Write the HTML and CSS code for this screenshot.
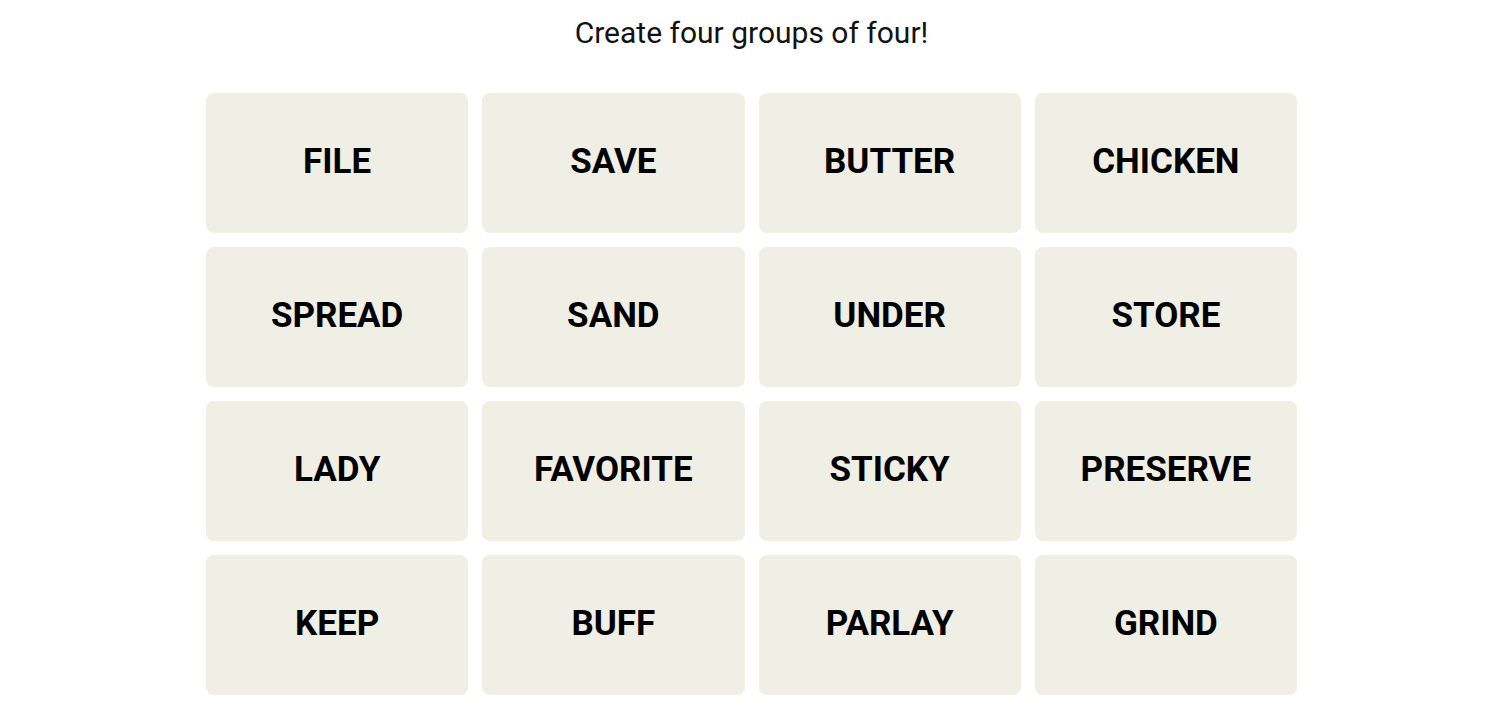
FILE: index.html
```html
<!DOCTYPE html>
<html lang="en">
<head>
<meta charset="utf-8">
<title>Connections</title>
<link rel="stylesheet" href="styles.css">
</head>
<body>
<main class="game">
  <h1 class="prompt">Create four groups of four!</h1>
  <section class="board">
    <button class="tile">FILE</button>
    <button class="tile">SAVE</button>
    <button class="tile">BUTTER</button>
    <button class="tile">CHICKEN</button>
    <button class="tile">SPREAD</button>
    <button class="tile">SAND</button>
    <button class="tile">UNDER</button>
    <button class="tile">STORE</button>
    <button class="tile">LADY</button>
    <button class="tile">FAVORITE</button>
    <button class="tile">STICKY</button>
    <button class="tile">PRESERVE</button>
    <button class="tile">KEEP</button>
    <button class="tile">BUFF</button>
    <button class="tile">PARLAY</button>
    <button class="tile">GRIND</button>
  </section>
</main>
</body>
</html>
```

FILE: styles.css
```css
html, body {
  margin: 0;
  padding: 0;
  background: #ffffff;
}

.game {
  display: flex;
  flex-direction: column;
  align-items: center;
  padding-left: 3px;
  font-family: Roboto, "Liberation Sans", sans-serif;
  color: #000;
}

.prompt {
  margin: 0;
  padding-top: 16px;
  font-size: 30px;
  line-height: 34px;
  font-weight: 400;
  color: #121212;
}

.board {
  margin-top: 43px;
  width: 1091px;
  display: grid;
  grid-template-columns: repeat(4, 1fr);
  grid-auto-rows: 140px;
  gap: 14px;
}

.tile {
  border: none;
  border-radius: 8px;
  background: #efefe6;
  color: #000;
  font-family: Roboto, "Liberation Sans", sans-serif;
  font-weight: 700;
  font-size: 35px;
  padding: 0 0 4px;
  display: flex;
  align-items: center;
  justify-content: center;
}
```
